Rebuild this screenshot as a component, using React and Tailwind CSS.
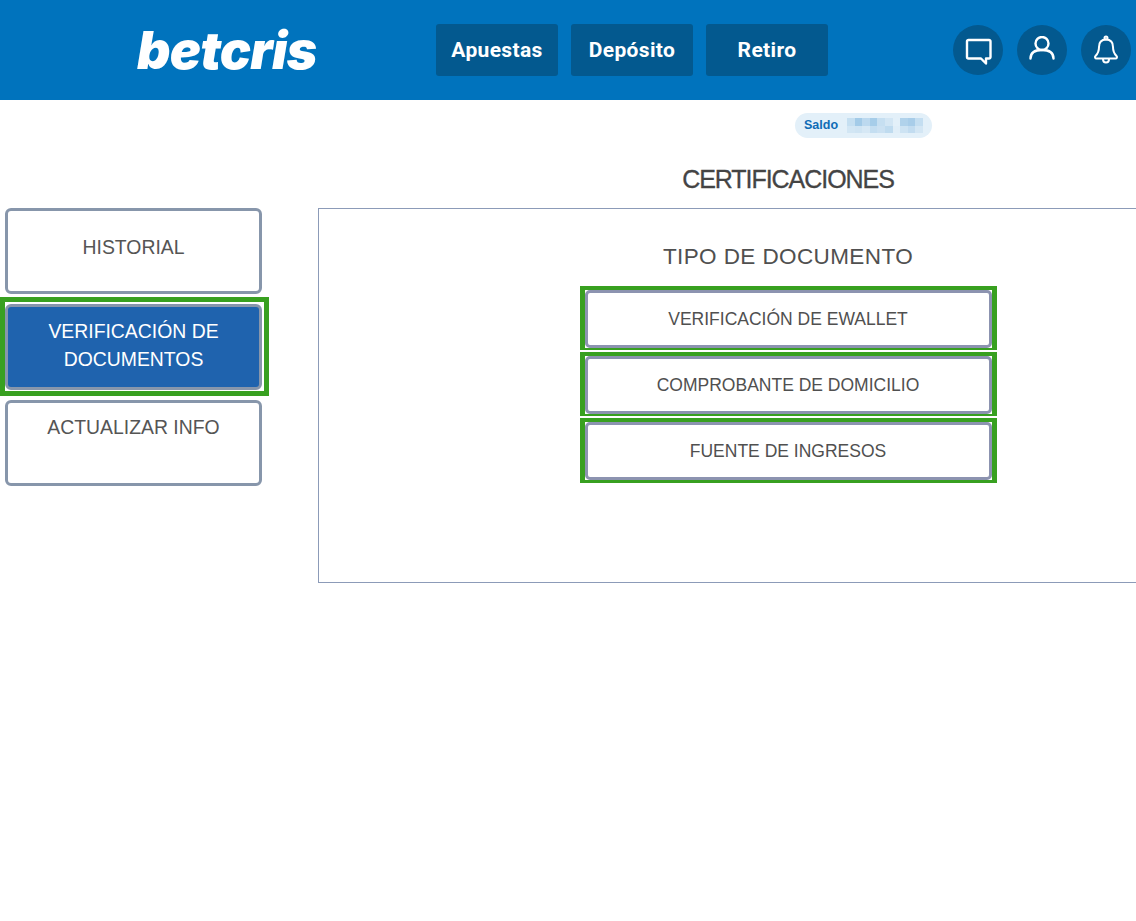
import { useState } from "react";

const navItems = [
  { label: "Apuestas", width: "w-[122px]" },
  { label: "Depósito", width: "w-[122px]" },
  { label: "Retiro", width: "w-[122px]" },
];

// pixelated balance, top row then bottom row
const blurTop = ["bg-[#c5dff1]", "bg-[#a3cbe8]", "bg-[#bcd9ef]", "bg-[#a6cde9]", "bg-[#c6dff1]", "bg-[#d3e6f4]", "bg-[#e3f0f9]", "bg-[#b0d2eb]", "bg-[#a8cde9]", "bg-[#c4def1]"];
const blurBottom = ["bg-[#d2e6f4]", "bg-[#cfe4f3]", "bg-[#d6e8f5]", "bg-[#c4def1]", "bg-[#cbe1f2]", "bg-[#bfdbef]", "bg-[#e0eef8]", "bg-[#cde3f3]", "bg-[#c2dcf0]", "bg-[#d3e6f4]"];

const IconCircle = ({ children }) => (
  <div className="w-[50px] h-[50px] rounded-full bg-[#03598f] flex items-center justify-center">
    {children}
  </div>
);

const SideButton = ({ children, active, className = "" }) => (
  <button
    className={`w-[257px] h-[86px] rounded-[6px] border-[3px] border-[#8796ab] text-[19.4px] leading-[28px] px-4 ${
      active ? "bg-[#1f63ae] text-white" : "bg-white text-[#555555]"
    } ${className}`}
  >
    {children}
  </button>
);

const DocButton = ({ label }) => (
  <div className="w-[417px] border-x-[5px] border-t-[4px] border-b-[2px] last:border-b-[3px] border-[#38a020] bg-white">
    <button className="block w-[407px] h-[58px] rounded-[5px] border-[3px] border-[#8c93b0] bg-white text-[17.5px] text-[#505050]">
      {label}
    </button>
  </div>
);

const App = () => {
  const [tab] = useState("docs");

  return (
    <div className="w-full min-h-[921px] bg-white overflow-hidden font-['Liberation_Sans','Roboto',sans-serif]">
      <header className="h-[100px] bg-[#0073bd] flex items-center">
        <div className="w-[436px] pl-[137px] shrink-0">
          <span className="block w-fit pt-[2px] font-['Inter',sans-serif] italic font-black text-[52px] leading-none -tracking-[0.8px] text-white">
            betcris
          </span>
        </div>
        <nav className="flex gap-[13px] shrink-0">
          {navItems.map((item) => (
            <a
              key={item.label}
              className={`${item.width} h-[52px] pt-[2px] rounded-[3px] bg-[#03598f] flex items-center justify-center font-['Roboto',sans-serif] font-bold text-[21px] tracking-[0.35px] text-white`}
            >
              {item.label}
            </a>
          ))}
        </nav>
        <div className="flex gap-[14px] ml-[125px] shrink-0">
          <IconCircle>
            <svg width="28" height="30" viewBox="0 0 28 30" fill="none" stroke="white" strokeWidth="2.4" strokeLinejoin="round">
              <path d="M4.500 5h20.500a1.500 1.500 0 0 1 1.500 1.500v15.500a1.500 1.500 0 0 1-1.500 1.500h-3v5l-5-5H4.500a1.500 1.500 0 0 1-1.500-1.500V6.500a1.500 1.500 0 0 1 1.500-1.500z" />
            </svg>
          </IconCircle>
          <IconCircle>
            <svg width="28" height="28" viewBox="0 0 28 28" fill="none" stroke="white" strokeWidth="2.4" strokeLinecap="round">
              <circle cx="14" cy="7.500" r="6.500" />
              <path d="M2.500 22.500c0-6 5-8.500 11.500-8.500s11.500 2.500 11.500 8.500" />
            </svg>
          </IconCircle>
          <IconCircle>
            <svg width="26" height="30" viewBox="0 0 26 30" fill="none" stroke="white" strokeWidth="2" strokeLinejoin="round">
              <path d="M13 4.500c-4.500 0-7 3-7 7.500 0 5-1.500 7-3.500 9-1 1-.5 2.500 1 2.500h19c1.500 0 2-1.500 1-2.500-2-2-3.500-4-3.500-9 0-4.500-2.500-7.500-7-7.500z" />
              <circle cx="13" cy="3" r="1.500" />
              <path d="M10 24c0 2 1.300 3.500 3 3.500s3-1.500 3-3.500" />
            </svg>
          </IconCircle>
        </div>
      </header>

      <div className="flex">
        <aside className="w-[318px] shrink-0 pt-[108px] flex flex-col items-start">
          <div className="ml-[5px]">
            <SideButton className="pb-[9px]">HISTORIAL</SideButton>
          </div>
          <div className="mt-[3px] w-[269px] h-[99px] border-[5px] border-[#38a020] bg-white flex items-center">
            <SideButton active={tab === "docs"} className="pb-[4px]">
              VERIFICACIÓN DE DOCUMENTOS
            </SideButton>
          </div>
          <div className="ml-[5px] mt-[4px]">
            <SideButton>
              <span className="block -mt-[30px]">ACTUALIZAR INFO</span>
            </SideButton>
          </div>
        </aside>

        <main className="w-[940px] shrink-0 pt-[13px] flex flex-col items-center">
          <div className="h-[25px] w-[137px] rounded-full bg-[#e3f0f9] flex items-center pl-[9px] gap-[9px] self-start ml-[477px]">
            <span className="font-bold text-[12.500px] text-[#0f6cb6]">Saldo</span>
            <div className="flex flex-col">
              <div className="flex">
                {blurTop.map((c, i) => (
                  <div key={i} className={`w-[7.600px] h-[8px] ${c}`} />
                ))}
              </div>
              <div className="flex">
                {blurBottom.map((c, i) => (
                  <div key={i} className={`w-[7.600px] h-[7px] ${c}`} />
                ))}
              </div>
            </div>
          </div>
          <h1 className="mt-[26px] text-[25px] leading-[30px] -tracking-[1.050px] text-[#444444] [-webkit-text-stroke:0.3px_#444444]">CERTIFICACIONES</h1>
          <section className="mt-[14px] w-full h-[375px] border border-[#8c9bb8] flex flex-col items-center pt-[33px]">
            <h2 className="text-[22.500px] leading-[30px] tracking-[0.4px] text-[#505050] mb-[14px]">TIPO DE DOCUMENTO</h2>
            <div className="flex flex-col gap-[2px]">
              <DocButton label="VERIFICACIÓN DE EWALLET" />
              <DocButton label="COMPROBANTE DE DOMICILIO" />
              <DocButton label="FUENTE DE INGRESOS" />
            </div>
          </section>
        </main>
      </div>
    </div>
  );
};

export default App;
